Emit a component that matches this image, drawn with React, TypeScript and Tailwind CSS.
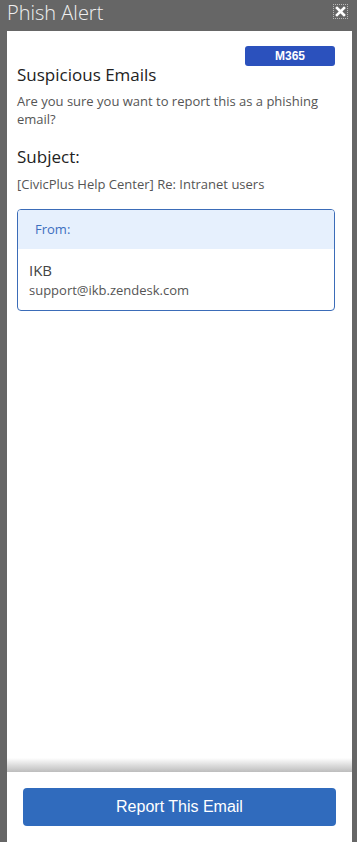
import React from 'react';

const font = { fontFamily: '"Segoe UI", "Open Sans", sans-serif' };

export default function App() {
  return (
    <div className="h-[842px] w-[357px] bg-[#666666] flex flex-col overflow-hidden" style={font}>
      {/* Title bar */}
      <div className="h-[31px] shrink-0 flex items-center justify-between pl-[7px] pr-[9px]">
        <span className="text-[20px] font-light text-[#f0f0f0] leading-none -mt-[6px]">Phish Alert</span>
        <button className="w-[15px] h-[15px] border border-dotted border-[#b8b8b8] flex items-center justify-center -mt-[8px]">
          <svg width="11" height="11" viewBox="0 0 11 11">
            <path d="M2 2 L9 9 M9 2 L2 9" stroke="#ffffff" strokeWidth="2.6" strokeLinecap="square" />
          </svg>
        </button>
      </div>

      {/* Panel */}
      <div className="flex-1 ml-[7px] mr-[5px] bg-white flex flex-col">
        <div className="flex-1 pl-[10px] pr-[17px] pt-[15px]">
          <div className="flex justify-end">
            <span className="w-[90px] h-[20px] rounded-[3px] bg-[#2b51bd] text-white text-[12px] font-bold flex items-center justify-center" style={{ fontFamily: '"Liberation Sans", Arial, sans-serif' }}>
              M365
            </span>
          </div>
          <h1 className="text-[17px] text-[#222] leading-[24px] -mt-[3px]">Suspicious Emails</h1>
          <p className="text-[13px] text-[#555] leading-[18px] mt-[5px]">
            Are you sure you want to report this as a phishing email?
          </p>
          <h2 className="text-[17px] text-[#222] leading-[24px] mt-[17px]">Subject:</h2>
          <p className="text-[13px] text-[#555] leading-[18px] mt-[6px]">[CivicPlus Help Center] Re: Intranet users</p>

          <div className="mt-[16px] border border-[#3b6cb8] rounded-[4px] overflow-hidden">
            <div className="h-[39px] bg-[#e6f0fd] flex items-center pl-[17px] text-[13px] text-[#3c6fc0]">From:</div>
            <div className="h-[61px] px-[11px] pt-[11px]">
              <div className="text-[15px] text-[#444] leading-[20px]">IKB</div>
              <div className="text-[13px] text-[#555] leading-[18px] mt-[1px]">support@ikb.zendesk.com</div>
            </div>
          </div>
        </div>

        {/* Footer */}
        <div className="h-[14px] shrink-0 bg-gradient-to-b from-white to-[#bdbdbd]" />
        <div className="h-[70px] shrink-0 px-[16px] pt-[16px]">
          <button
            className="w-full h-[38px] rounded-[4px] bg-[#306bbd] text-white text-[16px]"
            style={{ fontFamily: '"Liberation Sans", Arial, sans-serif' }}
          >
            Report This Email
          </button>
        </div>
      </div>
    </div>
  );
}
